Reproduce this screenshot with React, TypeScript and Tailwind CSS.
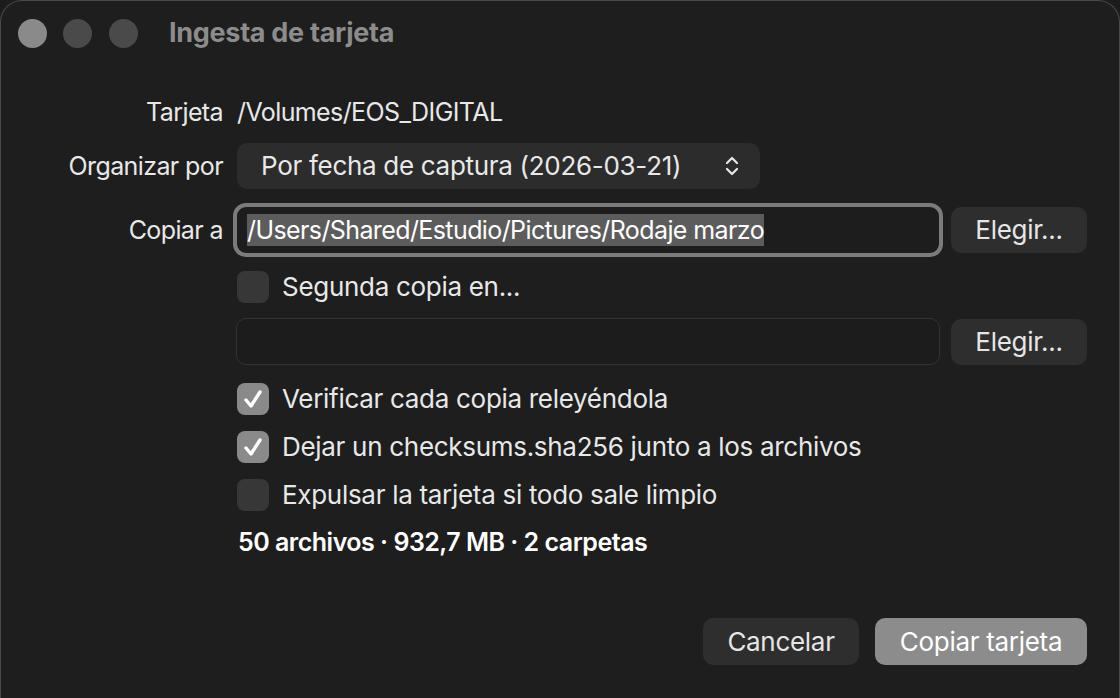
import React from "react";

const font = { fontFamily: "Inter, 'Noto Sans', sans-serif" };

function Check({ checked }: { checked: boolean }) {
  return (
    <div
      className={
        "w-8 h-8 rounded-[8px] flex items-center justify-center shrink-0 " +
        (checked ? "bg-[#8a8a8a]" : "bg-[#373737]")
      }
    >
      {checked && (
        <svg width="32" height="32" viewBox="0 0 32 32" fill="none">
          <path d="M9 17l5 6L23 9" stroke="white" strokeWidth="3.4" strokeLinecap="round" strokeLinejoin="round" />
        </svg>
      )}
    </div>
  );
}

function ChooseButton() {
  return (
    <button className="w-[136px] h-[46px] rounded-[10px] bg-[#2e2e2e] text-[26px] tracking-[-0.3px] text-[#e6e6e6] shrink-0">
      Elegir...
    </button>
  );
}

export default function App() {
  return (
    <div className="w-[1120px] h-[698px] bg-[#1c1c1c] overflow-hidden" style={font}>
      <div className="h-full rounded-t-[22px] border-t border-x border-[#4a4a4a] bg-[#1e1e1e] flex flex-col">
        {/* title bar */}
        <div className="h-[65px] flex items-center pl-[17px] shrink-0">
          <div className="w-[29px] h-[29px] rounded-full bg-[#8a8a8a]" />
          <div className="w-[29px] h-[29px] rounded-full bg-[#4a4a4a] ml-[16px]" />
          <div className="w-[29px] h-[29px] rounded-full bg-[#4a4a4a] ml-[17px]" />
          <div className="ml-[31px] text-[27px] font-bold text-[#8c8c8c] tracking-[-0.3px]">Ingesta de tarjeta</div>
        </div>

        <div className="flex flex-col pr-[32px] text-[26px] leading-[32px] tracking-[-0.3px] text-[#e8e8e8]">
          {/* Tarjeta */}
          <div className="flex items-center h-[46px] mt-[23px]">
            <div className="w-[222px] text-right text-[25px] tracking-[-0.6px]">Tarjeta</div>
            <div className="ml-[14px] text-[25px] tracking-[-0.6px]">/Volumes/EOS_DIGITAL</div>
          </div>

          {/* Organizar por */}
          <div className="flex items-center mt-[8px]">
            <div className="w-[222px] text-right text-[25px] tracking-[-0.6px]">Organizar por</div>
            <div className="ml-[14px] w-[523px] h-[46px] rounded-[10px] bg-[#2c2c2c] flex items-center pl-[24px] pr-[20px] justify-between">
              <span>Por fecha de captura (2026-03-21)</span>
              <svg width="16" height="22" viewBox="0 0 16 22" fill="none">
                <path d="M3 8l5-5 5 5M3 14l5 5 5-5" stroke="#e8e8e8" strokeWidth="2.2" strokeLinecap="round" strokeLinejoin="round" />
              </svg>
            </div>
          </div>

          {/* Copiar a */}
          <div className="flex items-center mt-[18px]">
            <div className="w-[222px] text-right text-[25px] tracking-[-0.6px]">Copiar a</div>
            <div className="ml-[14px] flex-1 h-[46px] rounded-[9px] bg-[#1d1d1d] outline-[4px] outline-[#7b7b7b] outline-offset-0 flex items-center pl-[10px]">
              <span className="bg-[#5c5c5c] text-white text-[25px] tracking-[-0.6px]">/Users/Shared/Estudio/Pictures/Rodaje marzo</span>
            </div>
            <div className="ml-[12px]">
              <ChooseButton />
            </div>
          </div>

          {/* Segunda copia */}
          <div className="flex items-center mt-[18px] ml-[236px] gap-[13px]">
            <Check checked={false} />
            <span>Segunda copia en...</span>
          </div>

          <div className="flex items-center mt-[15px] ml-[235px]">
            <div className="flex-1 h-[47px] rounded-[10px] bg-[#1c1c1c] border border-[#333333]" />
            <div className="ml-[11px]">
              <ChooseButton />
            </div>
          </div>

          {/* options */}
          <div className="flex flex-col ml-[236px] mt-[18px] gap-[16px]">
            <div className="flex items-center gap-[13px]">
              <Check checked />
              <span>Verificar cada copia releyéndola</span>
            </div>
            <div className="flex items-center gap-[13px]">
              <Check checked />
              <span>Dejar un checksums.sha256 junto a los archivos</span>
            </div>
            <div className="flex items-center gap-[13px]">
              <Check checked={false} />
              <span>Expulsar la tarjeta si todo sale limpio</span>
            </div>
          </div>

          <div className="ml-[237px] mt-[15px] font-semibold text-white text-[25px] tracking-[-0.5px]">50 archivos · 932,7 MB · 2 carpetas</div>

          {/* buttons */}
          <div className="flex justify-end gap-[16px] mt-[60px]">
            <button className="w-[156px] h-[47px] rounded-[10px] bg-[#2e2e2e] text-[26px] text-[#e6e6e6]">Cancelar</button>
            <button className="w-[212px] h-[47px] rounded-[10px] bg-[#8c8c8c] text-[26px] text-white">Copiar tarjeta</button>
          </div>
        </div>
      </div>
    </div>
  );
}
